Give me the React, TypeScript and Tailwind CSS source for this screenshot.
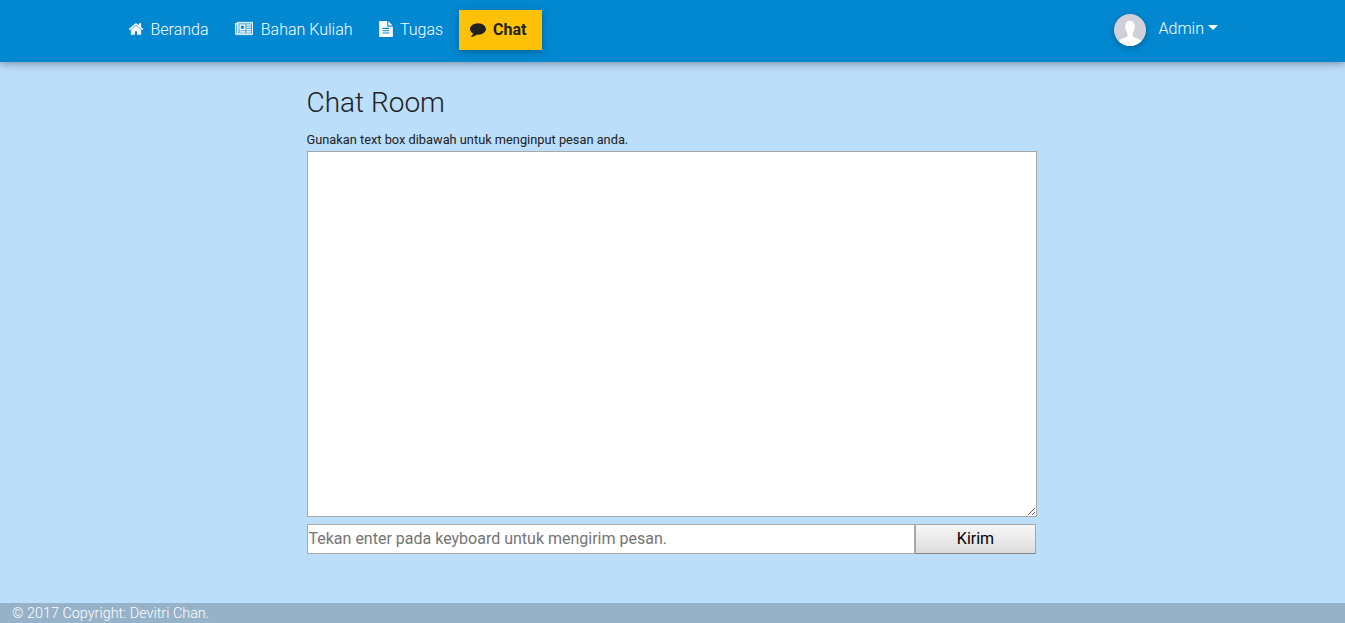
import React from "react";

type IconProps = { d: string; width?: number; className?: string };

function Icon({ d, width = 1792, className = "" }: IconProps) {
  return (
    <svg viewBox={`0 0 ${width} 1792`} className={`h-4 shrink-0 fill-current ${className}`}>
      <path d={d} />
    </svg>
  );
}

const home =
  "M1472 992v480q0 26-19 45t-45 19h-384v-384h-256v384h-384q-26 0-45-19t-19-45v-480q0-1 .5-3t.5-3l575-474 575 474q1 2 1 6zm223-69l-62 74q-8 9-21 11h-3q-13 0-21-7l-692-577-692 577q-12 8-24 7-13-2-21-11l-62-74q-8-10-7-23.5t11-21.5l719-599q32-26 76-26t76 26l244 204v-195q0-14 9-23t23-9h192q14 0 23 9t9 23v408l219 182q10 8 11 21.5t-7 23.5z";
const newspaper =
  "M1024 512h-384v384h384v-384zm128 640v128h-640v-128h640zm0-768v640h-640v-640h640zm640 768v128h-512v-128h512zm0-256v128h-512v-128h512zm0-256v128h-512v-128h512zm0-256v128h-512v-128h512zm-1536 960v-960h-128v960q0 26 19 45t45 19 45-19 19-45zm1664 0v-1088h-1536v1088q0 33-11 64h1483q26 0 45-19t19-45zm128-1216v1216q0 80-56 136t-136 56h-1664q-80 0-136-56t-56-136v-1088h256v-128h1792z";
const fileText =
  "M1596 476q14 14 28 36h-472v-472q22 14 36 28zm-476 164h544v1056q0 40-28 68t-68 28h-1344q-40 0-68-28t-28-68v-1600q0-40 28-68t68-28h800v544q0 40 28 68t68 28zm160 736v-64q0-14-9-23t-23-9h-704q-14 0-23 9t-9 23v64q0 14 9 23t23 9h704q14 0 23-9t9-23zm0-256v-64q0-14-9-23t-23-9h-704q-14 0-23 9t-9 23v64q0 14 9 23t23 9h704q14 0 23-9t9-23zm0-256v-64q0-14-9-23t-23-9h-704q-14 0-23 9t-9 23v64q0 14 9 23t23 9h704q14 0 23-9t9-23z";
const comment =
  "M1792 896q0 174-120 321.5t-326 233-450 85.5q-70 0-145-8-198 175-460 242-49 14-114 22-17 2-30.5-9t-17.5-29v-1q-3-4-.5-12t2-10 4.5-9.5l6-9 7-8.5 8-9q7-8 31-34.5t34.5-38 31-39.5 32.5-51 27-59 26-76q-157-89-247.5-220t-90.5-281q0-130 71-248.5t191-204.5 286-136.5 348-50.5q244 0 450 85.5t326 233 120 321.5z";

function Avatar() {
  return (
    <div className="size-8 overflow-hidden rounded-full bg-[#cfd0d8] shadow-[0_2px_5px_rgba(0,0,0,0.16),0_2px_10px_rgba(0,0,0,0.12)]">
      <svg viewBox="0 0 32 32" className="size-8 fill-white">
        <path d="M16 6.800c-3.300 0-4.900 2.200-4.600 5.500-.8.200-.5 2.600.5 3.200.2 1.600.8 2.600 1.500 3.300v3.200c-.7 2-7 2.400-10 5.500V33h25.200v-5.500c-3-3.100-9.300-3.500-10-5.500v-3.200c.7-.7 1.300-1.700 1.500-3.300 1-.6 1.300-3 .5-3.200C20.900 9 19.300 6.800 16 6.800z" />
      </svg>
    </div>
  );
}

export default function App() {
  return (
    <div className="flex h-[623px] flex-col bg-[#bbdefb] font-['Roboto',sans-serif] font-light text-[#212121]">
      <header className="flex h-[62px] shrink-0 items-start justify-between bg-[#0288d1] pr-[127px] pl-[117px] text-base text-white shadow-[0_2px_5px_rgba(0,0,0,0.16),0_2px_10px_rgba(0,0,0,0.2)]">
        <nav className="flex pt-2.5">
          <a className="flex h-10 w-[107px] items-center pl-[11px]">
            <Icon d={home} className="mr-[6.5px] mb-0.5 w-4" />
            Beranda
          </a>
          <a className="flex h-10 w-[144px] items-center pl-[11px]">
            <Icon d={newspaper} width={2048} className="mr-[7.5px] mb-0.5 w-[18.3px] stroke-current stroke-[45px]" />
            Bahan Kuliah
          </a>
          <a className="flex h-10 w-[91px] items-center pl-2.5">
            <Icon d={fileText} className="mr-[6px] mb-0.5 w-4" />
            Tugas
          </a>
          <a className="flex h-10 w-[83px] items-center bg-[#ffc107] pl-[11px] font-bold text-[#212121] shadow-[0_2px_5px_rgba(0,0,0,0.16),0_2px_10px_rgba(0,0,0,0.12)]">
            <Icon d={comment} className="mr-[7px] mb-0.5 w-4" />
            Chat
          </a>
        </nav>
        <div className="flex items-start pt-3.5">
          <Avatar />
          <span className="ml-[13px] leading-[30px]">Admin</span>
          <span className="mt-[11px] ml-1 border-x-5 border-t-5 border-x-transparent border-t-white" />
        </div>
      </header>

      <main className="ml-[306.5px] flex w-[730px] flex-1 flex-col">
        <h1 className="mt-6 h-[34px] text-[28px] leading-[34px]">Chat Room</h1>
        <p className="mt-2.5 h-[21px] text-[12.8px] leading-5 font-normal">
          Gunakan text box dibawah untuk menginput pesan anda.
        </p>
        <textarea readOnly className="block h-[366px] w-[730px] resize border border-[#a9a9a9] bg-white" />
        <div className="mt-[7px] flex h-[30px] w-[729px] font-normal">
          <input
            placeholder="Tekan enter pada keyboard untuk mengirim pesan."
            className="w-[608px] border border-[#a9a9a9] bg-white px-px text-base placeholder:text-[#757575]"
          />
          <button className="w-[121px] border border-[#a6a6a6] border-b-[#858585] bg-linear-to-b from-[#f6f6f6] to-[#dddddd] pl-px text-base text-black">
            Kirim
          </button>
        </div>
      </main>

      <footer className="h-5 shrink-0 bg-[#96b2c9] pl-3 text-[14.4px] leading-[22px] text-white">
        © 2017 Copyright: Devitri Chan.
      </footer>
    </div>
  );
}
